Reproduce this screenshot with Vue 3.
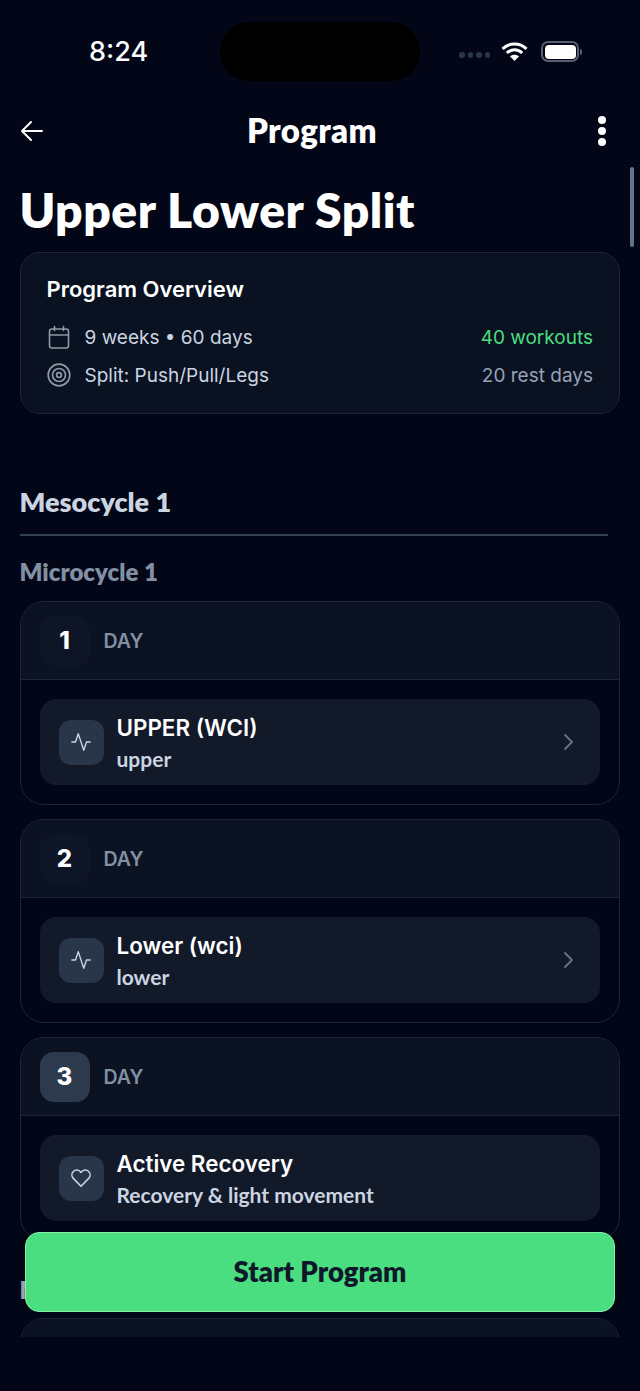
<template>
  <div class="screen">
    <div class="status-bar">
      <span class="time">8:24</span>
      <div class="island"></div>
      <div class="status-icons">
        <div class="signal"><i v-for="n in 4" :key="n"></i></div>
        <svg class="wifi" width="27" height="20" viewBox="0 0 27 20">
          <path d="M1.5 6.8C8.4.4 18.6.4 25.5 6.8M5.8 11C10.4 6.8 16.6 6.8 21.2 11" fill="none" stroke="#fff" stroke-width="3"/>
          <path d="M8.9 14.3c2.7-2.2 6.5-2.2 9.200 0L13.500 19z" fill="#fff"/>
        </svg>
        <div class="battery"><div class="battery-fill"></div></div>
        <div class="battery-cap"></div>
      </div>
    </div>

    <header class="nav">
      <svg width="24" height="24" viewBox="0 0 24 24" fill="none" stroke="#fff" stroke-width="2" stroke-linecap="round" stroke-linejoin="round">
        <path d="M22 12H2M11 3l-9 9 9 9" />
      </svg>
      <h2 class="nav-title">Program</h2>
      <div class="more"><i></i><i></i><i></i></div>
    </header>

    <main class="content">
      <h1 class="title">Upper Lower Split</h1>

      <section class="overview">
        <h3>Program Overview</h3>
        <div class="overview-row">
          <svg width="24" height="24" viewBox="0 0 24 24" fill="none" stroke="#8f99a8" stroke-width="1.6" stroke-linecap="round">
            <rect x="2.500" y="4" width="19" height="19" rx="2.500" />
            <path d="M2.500 10h19M7.500 1.500v4M16.500 1.500v4" />
          </svg>
          <span class="row-text">9 weeks • 60 days</span>
          <span class="green">40 workouts</span>
        </div>
        <div class="overview-row">
          <svg width="24" height="24" viewBox="0 0 24 24" fill="none" stroke="#8f99a8" stroke-width="1.700">
            <circle cx="12" cy="12" r="10.800" />
            <circle cx="12" cy="12" r="6.500" />
            <circle cx="12" cy="12" r="2.400" />
          </svg>
          <span class="row-text">Split: Push/Pull/Legs</span>
          <span class="muted">20 rest days</span>
        </div>
      </section>

      <h2 class="meso">Mesocycle 1</h2>
      <div class="divider"></div>
      <h3 class="micro">Microcycle 1</h3>

      <section v-for="day in days" :key="day.num" class="day-card">
        <div class="day-head">
          <div class="day-num" :class="{ active: day.active }">{{ day.num }}</div>
          <span class="day-label">DAY</span>
        </div>
        <div class="day-body">
          <div class="workout">
            <div class="workout-icon">
              <svg v-if="day.rest" width="22" height="22" viewBox="0 0 24 24" fill="none" stroke="#cbd5e1" stroke-width="1.700" stroke-linejoin="round">
                <path d="M12 21 3.600 12.400a5.400 5.400 0 0 1 0-7.500 5.200 5.200 0 0 1 7.400 0l1 1 1-1a5.200 5.200 0 0 1 7.400 0 5.400 5.400 0 0 1 0 7.500z" />
              </svg>
              <svg v-else width="22" height="22" viewBox="0 0 24 24" fill="none" stroke="#cbd5e1" stroke-width="1.500" stroke-linecap="round" stroke-linejoin="round">
                <path d="M2 12h4l3-9 6 18 3-9h4" />
              </svg>
            </div>
            <div class="workout-text">
              <div class="workout-name">{{ day.name }}</div>
              <div class="workout-sub">{{ day.sub }}</div>
            </div>
            <svg v-if="!day.rest" class="chevron" width="20" height="20" viewBox="0 0 20 20" fill="none" stroke="#64748b" stroke-width="1.800" stroke-linecap="round" stroke-linejoin="round">
              <path d="m6 3 7 7-7 7" />
            </svg>
          </div>
        </div>
      </section>

      <h3 class="micro next">Microcycle 2</h3>
      <section class="day-card"><div class="day-head"></div></section>
    </main>

    <div class="scrollbar"></div>
    <button class="start">Start Program</button>
  </div>
</template>

<script setup>
const days = [
  { num: 1, name: 'UPPER (WCI)', sub: 'upper' },
  { num: 2, name: 'Lower (wci)', sub: 'lower' },
  { num: 3, name: 'Active Recovery', sub: 'Recovery & light movement', active: true, rest: true },
]
</script>

<style>
html, body {
  margin: 0;
  background: #020617;
}
</style>

<style scoped>
.screen {
  position: relative;
  width: 640px;
  height: 1391px;
  overflow: hidden;
  background: #020617;
  color: #fff;
  font-family: Inter, sans-serif;
}

.status-bar {
  height: 101px;
  box-sizing: border-box;
  padding: 22px 50px 0 89px;
  display: flex;
  align-items: flex-start;
}

.time {
  flex: none;
  width: 131px;
  margin-top: 14px;
  font-size: 27px;
  line-height: 32px;
  font-weight: 500;
}

.island {
  flex: none;
  width: 200px;
  height: 59px;
  border-radius: 30px;
  background: #000;
}

.status-icons {
  flex: none;
  margin-left: 39px;
  margin-top: 19px;
  display: flex;
  align-items: center;
}

.signal {
  display: flex;
  gap: 3px;
  margin-top: 7px;
}

.signal i {
  width: 5.500px;
  height: 5.500px;
  border-radius: 50%;
  background: #2b3648;
}

.wifi {
  margin-left: 11px;
}

.battery {
  margin-left: 13px;
  width: 38px;
  height: 21px;
  box-sizing: border-box;
  border: 2px solid #566072;
  border-radius: 7px;
  padding: 1.500px;
}

.battery-fill {
  height: 100%;
  background: #fff;
  border-radius: 4px;
}

.battery-cap {
  width: 2px;
  height: 6px;
  margin-left: 1px;
  background: #566072;
  border-radius: 0 2px 2px 0;
}

.nav {
  height: 60px;
  box-sizing: border-box;
  padding: 0 34px 0 20px;
  display: grid;
  grid-template-columns: 1fr auto 1fr;
  align-items: center;
}

.nav-title {
  margin: 0 2px 2px 0;
  font-family: Lato, sans-serif;
  font-size: 33px;
  font-weight: 800;
  letter-spacing: 0.4px;
}

.more {
  justify-self: end;
  display: flex;
  flex-direction: column;
  gap: 3px;
}

.more i {
  width: 8px;
  height: 8px;
  border-radius: 50%;
  background: #fff;
}

.content {
  height: 1176px;
  overflow: hidden;
  padding: 0 20px 0 19.500px;
}

.title {
  margin: 20px 0 13px;
  font-family: Lato, sans-serif;
  font-size: 48px;
  line-height: 58px;
  font-weight: 800;
  letter-spacing: 0.5px;
}

.overview {
  height: 162px;
  box-sizing: border-box;
  padding: 22px 26px 0;
  background: #0a1120;
  border: 1.500px solid #1c2636;
  border-radius: 20px;
}

.overview h3 {
  margin: 0 0 15px;
  font-size: 22px;
  line-height: 28px;
  font-weight: 600;
}

.overview-row {
  height: 38px;
  display: flex;
  align-items: center;
  font-size: 19px;
}

.row-text {
  flex: 1;
  margin-left: 14px;
  color: #cbd5e1;
}

.green {
  color: #4ade80;
}

.muted {
  color: #94a3b8;
}

.meso {
  margin: 71px 0 0;
  font-family: Lato, sans-serif;
  font-size: 27px;
  line-height: 34px;
  font-weight: 800;
  color: #cbd5e1;
}

.divider {
  width: 588px;
  height: 2px;
  margin-top: 15px;
  background: #334155;
}

.micro {
  margin: 21px 0 14px;
  font-family: Lato, sans-serif;
  font-size: 24px;
  line-height: 30px;
  font-weight: 800;
  color: #8290a3;
}

.micro.next {
  margin: 34px 0 13px;
  color: #9aa3b4;
}

.day-card {
  box-sizing: border-box;
  height: 204px;
  margin-bottom: 14px;
  border: 1.500px solid #1c2636;
  border-radius: 24px;
  overflow: hidden;
}

.day-head {
  height: 78px;
  box-sizing: border-box;
  padding: 0 19px;
  display: flex;
  align-items: center;
  gap: 14px;
  background: #0b1221;
  border-bottom: 1.500px solid #1c2636;
}

.day-num {
  width: 50px;
  height: 50px;
  border-radius: 14px;
  display: flex;
  align-items: center;
  justify-content: center;
  background: #0d1526;
  font-size: 24px;
  font-weight: 800;
}

.day-num.active {
  background: #2d3a4d;
}

.day-label {
  font-size: 19.500px;
  font-weight: 600;
  color: #8290a3;
}

.day-body {
  padding: 19px 19px;
}

.workout {
  height: 86px;
  box-sizing: border-box;
  padding: 0 21px 0 19px;
  display: flex;
  align-items: center;
  background: #121929;
  border-radius: 16px;
}

.workout-icon {
  width: 45px;
  height: 45px;
  border-radius: 12px;
  background: #293548;
  display: flex;
  align-items: center;
  justify-content: center;
}

.workout-text {
  flex: 1;
  margin-left: 13px;
}

.workout-name {
  font-size: 22.400px;
  line-height: 30px;
  font-weight: 600;
}

.workout-sub {
  margin-top: 3px;
  font-family: Lato, sans-serif;
  font-size: 21px;
  line-height: 26px;
  font-weight: 700;
  color: #cbd5e1;
}

.scrollbar {
  position: absolute;
  top: 167px;
  right: 6px;
  width: 4px;
  height: 80px;
  border-radius: 2px;
  background: #64748b;
}

.start {
  position: absolute;
  left: 25px;
  top: 1232px;
  width: 590px;
  height: 80px;
  box-sizing: border-box;
  padding: 0 0 1px;
  border: 1.500px solid #86efac;
  border-radius: 14px;
  background: #4ade80;
  color: #0f172a;
  font-family: Lato, sans-serif;
  font-size: 27.500px;
  font-weight: 800;
}
</style>
